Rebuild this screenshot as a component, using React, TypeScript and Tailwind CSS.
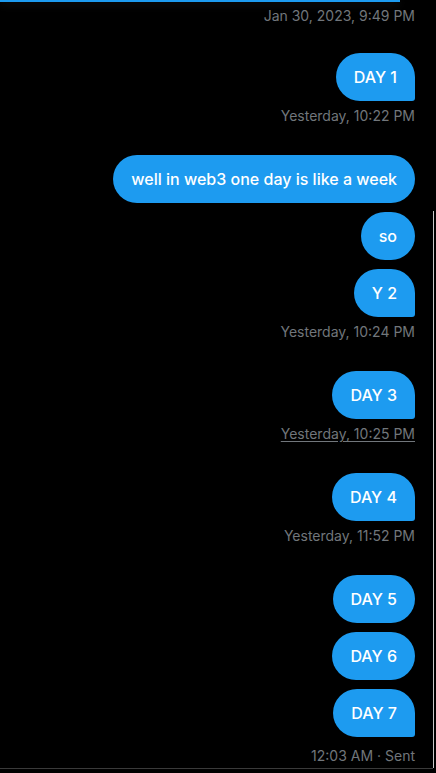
import React from 'react';

type Msg = { text: string; tail?: boolean };
type Group = { messages: Msg[]; time: string; underline?: boolean; sent?: boolean };

const groups: Group[] = [
  { messages: [{ text: 'DAY 1', tail: true }], time: 'Yesterday, 10:22 PM' },
  {
    messages: [
      { text: 'well in web3 one day is like a week' },
      { text: 'so' },
      { text: 'Y 2', tail: true },
    ],
    time: 'Yesterday, 10:24 PM',
  },
  { messages: [{ text: 'DAY 3', tail: true }], time: 'Yesterday, 10:25 PM', underline: true },
  { messages: [{ text: 'DAY 4', tail: true }], time: 'Yesterday, 11:52 PM' },
  {
    messages: [{ text: 'DAY 5' }, { text: 'DAY 6' }, { text: 'DAY 7', tail: true }],
    time: '12:03 AM · Sent',
    sent: true,
  },
];

function Bubble({ msg }: { msg: Msg }) {
  return (
    <div
      className={
        msg.tail
          ? 'rounded-[24px] rounded-br-[3px] bg-[#1d9bf0] px-[18px] py-[14px] text-[16px] font-medium leading-[20px] text-white'
          : 'rounded-[24px] bg-[#1d9bf0] px-[18px] py-[14px] text-[16px] font-medium leading-[20px] text-white'
      }
    >
      {msg.text}
    </div>
  );
}

export default function App() {
  return (
    <div className="relative h-[773px] w-[436px] overflow-hidden bg-black font-['Inter','Liberation_Sans',sans-serif]">
      {/* top header edge */}
      <div className="h-[2px] w-[400px] bg-[#1d9bf0] shadow-[0_2px_8px_rgba(255,255,255,0.14)]" />

      <div className="flex flex-col items-end pr-[21px]">
        <div className="mt-[6px] text-[14px] leading-[16px] text-[#71767b]">
          Jan 30, 2023, 9:49 PM
        </div>

        {groups.map((group, i) => (
          <div
            key={i}
            className={i === 0 ? 'mt-[29px] flex flex-col items-end' : 'mt-[31px] flex flex-col items-end'}
          >
            <div className="flex flex-col items-end gap-[9px]">
              {group.messages.map((msg, j) => (
                <Bubble key={j} msg={msg} />
              ))}
            </div>
            <div
              className={
                group.underline
                  ? 'mt-[7px] text-[14px] leading-[16px] text-[#71767b] underline underline-offset-2'
                  : group.sent
                    ? 'mt-[11px] text-[14px] leading-[16px] text-[#71767b]'
                    : 'mt-[7px] text-[14px] leading-[16px] text-[#71767b]'
              }
            >
              {group.time}
            </div>
          </div>
        ))}
      </div>

      {/* scrollbar edge */}
      <div className="absolute left-[433px] top-[211px] h-[557px] w-px bg-[#c8c8c8]" />
      {/* bottom divider */}
      <div className="absolute left-0 top-[768px] h-px w-[433px] bg-[#3a3a3a]" />
    </div>
  );
}
